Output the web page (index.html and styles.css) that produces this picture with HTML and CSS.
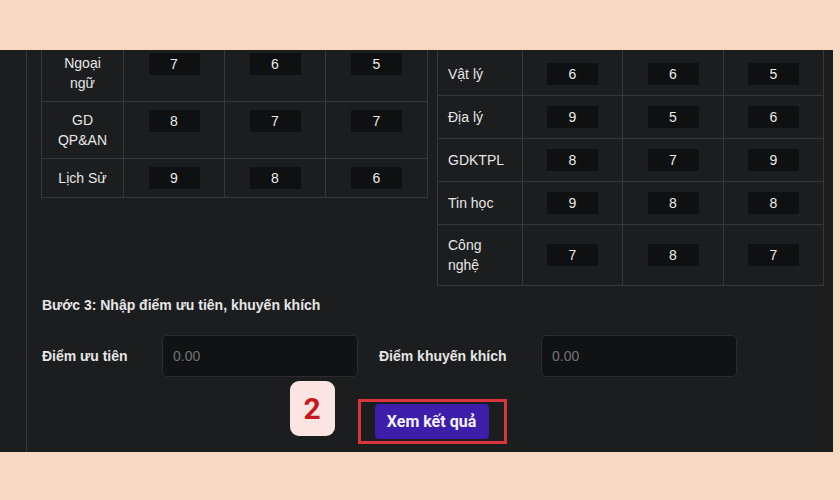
FILE: index.html
```html
<!DOCTYPE html>
<html lang="vi">
<head>
<meta charset="utf-8">
<title>Tính điểm</title>
<link rel="stylesheet" href="styles.css">
</head>
<body>
<div class="panel">
  <div class="inner">
    <div class="tables">
      <table class="grade left">
        <colgroup><col class="c1"><col class="c2"><col class="c2"><col class="c3"></colgroup>
        <tr><td class="subj">Ngoại ngữ</td><td><input class="score" value="7"></td><td><input class="score" value="6"></td><td><input class="score" value="5"></td></tr>
        <tr><td class="subj">GD QP&amp;AN</td><td><input class="score" value="8"></td><td><input class="score" value="7"></td><td><input class="score" value="7"></td></tr>
        <tr><td class="subj">Lịch Sử</td><td><input class="score" value="9"></td><td><input class="score" value="8"></td><td><input class="score" value="6"></td></tr>
      </table>
      <table class="grade right">
        <colgroup><col class="r1"><col class="r2"><col class="r3"><col class="r4"></colgroup>
        <tr class="first"><td class="subj">Vật lý</td><td><input class="score" value="6"></td><td><input class="score" value="6"></td><td><input class="score" value="5"></td></tr>
        <tr><td class="subj">Địa lý</td><td><input class="score" value="9"></td><td><input class="score" value="5"></td><td><input class="score" value="6"></td></tr>
        <tr><td class="subj">GDKTPL</td><td><input class="score" value="8"></td><td><input class="score" value="7"></td><td><input class="score" value="9"></td></tr>
        <tr><td class="subj">Tin học</td><td><input class="score" value="9"></td><td><input class="score" value="8"></td><td><input class="score" value="8"></td></tr>
        <tr><td class="subj">Công nghệ</td><td><input class="score" value="7"></td><td><input class="score" value="8"></td><td><input class="score" value="7"></td></tr>
      </table>
    </div>
    <h3 class="step">Bước 3: Nhập điểm ưu tiên, khuyến khích</h3>
    <div class="form-row">
      <label class="lbl lbl1">Điểm ưu tiên</label>
      <input class="field" placeholder="0.00">
      <label class="lbl lbl2">Điểm khuyến khích</label>
      <input class="field" placeholder="0.00">
    </div>
    <div class="btn-row">
      <div class="highlight">
        <span class="badge">2</span>
        <button class="submit">Xem kết quả</button>
      </div>
    </div>
  </div>
</div>
</body>
</html>
```

FILE: styles.css
```css
html, body {
  margin: 0;
  padding: 0;
}
body {
  background: #f6d8c3;
  width: 840px;
  height: 500px;
  overflow: hidden;
  font-family: "Liberation Sans", Arial, sans-serif;
}
.panel {
  width: 833px;
  height: 402px;
  margin-top: 50px;
  background: #1c1d1f;
  overflow: hidden;
  padding-left: 26px;
  box-sizing: border-box;
}
.inner {
  height: 408px;
  margin-top: -6px;
  border-left: 1px solid #36373a;
  padding-left: 14px;
  padding-right: 10px;
  box-sizing: border-box;
}
.tables {
  display: flex;
  gap: 9px;
  align-items: flex-start;
}
.grade {
  border-collapse: collapse;
  table-layout: fixed;
  width: 386px;
  color: #e6e6e6;
  font-size: 14px;
  line-height: 20px;
}
.grade td {
  border: 1px solid #37383b;
  padding: 8px;
}
.left .c1 { width: 82px; }
.left .c2 { width: 101px; }
.left .c3 { width: 102px; }
.left td { vertical-align: top; }
.left td.subj {
  text-align: center;
  vertical-align: middle;
}
.right .r1 { width: 85px; }
.right .r2 { width: 100px; }
.right .r3 { width: 101px; }
.right .r4 { width: 100px; }
.right td {
  padding: 10px;
  vertical-align: middle;
}
.right td.subj {
  text-align: left;
}
.right tr.first td {
  padding-top: 18px;
}
.score {
  display: block;
  margin: 0 auto;
  width: 51px;
  height: 22px;
  box-sizing: border-box;
  border: none;
  background: #0f1011;
  color: #ececec;
  text-align: center;
  font-family: "Liberation Sans", Arial, sans-serif;
  font-size: 14px;
  padding: 0;
}
.step {
  margin: 9px 0 0 1px;
  font-size: 14px;
  line-height: 20px;
  font-weight: bold;
  color: #e6e6e6;
}
.form-row {
  display: flex;
  align-items: center;
  margin-top: 20px;
  margin-left: 1px;
}
.lbl {
  font-size: 14px;
  font-weight: bold;
  color: #e6e6e6;
}
.lbl1 { width: 120px; }
.lbl2 { width: 162px; margin-left: 21px; }
.field {
  width: 196px;
  height: 42px;
  box-sizing: border-box;
  background: #111214;
  border: 1px solid #2b2c2f;
  border-radius: 5px;
  padding: 0 10px;
  color: #e6e6e6;
  font-family: "Liberation Sans", Arial, sans-serif;
  font-size: 14px;
}
.field::placeholder {
  color: #737476;
}
.btn-row {
  display: flex;
  justify-content: center;
  margin-top: 22px;
}
.highlight {
  position: relative;
  display: flex;
  border: 3px solid #d8363c;
  padding: 2px 15px 2px 14px;
}
.submit {
  width: 114px;
  height: 35px;
  background: #3c1eab;
  color: #f4f2ff;
  border: none;
  border-radius: 4px;
  font-family: Roboto, "Liberation Sans", sans-serif;
  font-weight: bold;
  font-size: 16px;
  padding: 0;
}
.badge {
  position: absolute;
  left: -71px;
  top: -21px;
  width: 45px;
  height: 55px;
  border-radius: 9px;
  background: #fbe5e3;
  color: #c8171f;
  font-family: Roboto, "Liberation Sans", sans-serif;
  font-weight: bold;
  font-size: 30px;
  display: flex;
  align-items: center;
  justify-content: center;
}
```
